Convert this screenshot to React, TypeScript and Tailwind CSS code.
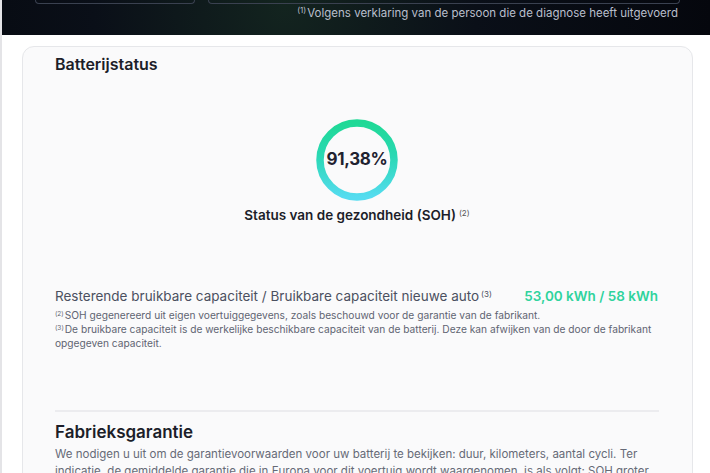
import React from 'react';

function Gauge() {
  const r = 37;
  return (
    <div className="relative w-[84px] h-[84px]">
      <svg width="84" height="84" viewBox="0 0 84 84">
        <defs>
          <linearGradient id="soh" x1="0" y1="0" x2="0" y2="1">
            <stop offset="0%" stopColor="#1fd996" />
            <stop offset="45%" stopColor="#2ad8b4" />
            <stop offset="100%" stopColor="#55dcf0" />
          </linearGradient>
        </defs>
        <circle cx="42" cy="42" r={r} fill="none" stroke="url(#soh)" strokeWidth="7.5" />
      </svg>
      <div className="absolute inset-0 flex items-center justify-center text-[17px] font-bold text-[#1f2230] tracking-[-0.3px]">
        91,38%
      </div>
    </div>
  );
}

export default function App() {
  return (
    <div className="w-[710px] h-[473px] overflow-hidden bg-white font-['Inter',sans-serif] border-l-2 border-[#e4e4e7]">
      {/* dark header strip */}
      <div className="h-[35px] bg-[radial-gradient(circle_at_40%_20%,#13241f_0%,#0a0f18_45%,#05070d_100%)]">
        <div className="flex gap-[13px] pl-[33px] pr-[30px]">
          <div className="w-[160px] h-[4px] border border-t-0 border-[#3a4150] rounded-b-[6px]" />
          <div className="flex-1 h-[4px] border border-t-0 border-[#3a4150] rounded-b-[6px]" />
        </div>
        <div className="flex justify-end pr-[32px] pt-[2px] text-[11.5px] text-[#b9bfcc] leading-[15px]">
          <span>
            <sup className="text-[8px] leading-none mr-[1px]">(1)</sup>Volgens verklaring van de persoon die de diagnose heeft uitgevoerd
          </span>
        </div>
      </div>

      <div className="pl-[20px] pr-[17px] pt-[11px]">
        <div className="bg-[#fafafb] border border-[#e6e7ea] rounded-[12px] pl-[32px] pr-[33px] pt-[6px]">
          <h2 className="text-[16px] font-semibold text-[#1c1e29] leading-[22px]">Batterijstatus</h2>

          <div className="flex flex-col items-center mt-[43px]">
            <Gauge />
            <div className="mt-[4px] text-[13.5px] font-semibold text-[#1c1e29] leading-[18px]">
              Status van de gezondheid (SOH)
              <sup className="text-[8px] leading-none font-normal text-[#555] ml-[3px]">(2)</sup>
            </div>
          </div>

          <div className="flex items-center justify-between mt-[63px]">
            <div className="text-[13.5px] text-[#4b5060] leading-[18px]">
              Resterende bruikbare capaciteit / Bruikbare capaciteit nieuwe auto
              <sup className="text-[8px] leading-none ml-[2px]">(3)</sup>
            </div>
            <div className="text-[13.5px] font-semibold text-[#2fd39d] leading-[18px] mr-[1px]">53,00 kWh / 58 kWh</div>
          </div>

          <div className="mt-[3px] text-[10.2px] text-[#5f6472] leading-[14px]">
            <p>
              <sup className="text-[6.5px] leading-none mr-[1px]">(2)</sup>SOH gegenereerd uit eigen voertuiggegevens, zoals beschouwd voor de garantie van de fabrikant.
            </p>
            <p>
              <sup className="text-[6.5px] leading-none mr-[1px]">(3)</sup>De bruikbare capaciteit is de werkelijke beschikbare capaciteit van de batterij. Deze kan afwijken van de door de fabrikant opgegeven capaciteit.
            </p>
          </div>

          <div className="mt-[60px] border-t-2 border-[#ececef]" />

          <h2 className="mt-[8px] text-[17px] font-semibold text-[#1c1e29] leading-[24px]">Fabrieksgarantie</h2>
          <p className="mt-[2px] text-[11.5px] text-[#666a77] leading-[17px]">
            We nodigen u uit om de garantievoorwaarden voor uw batterij te bekijken: duur, kilometers, aantal cycli. Ter indicatie, de gemiddelde garantie die in Europa voor dit voertuig wordt waargenomen, is als volgt: SOH groter dan 70% gedurende 8 jaar of 160.000 km.
          </p>
        </div>
      </div>
    </div>
  );
}
